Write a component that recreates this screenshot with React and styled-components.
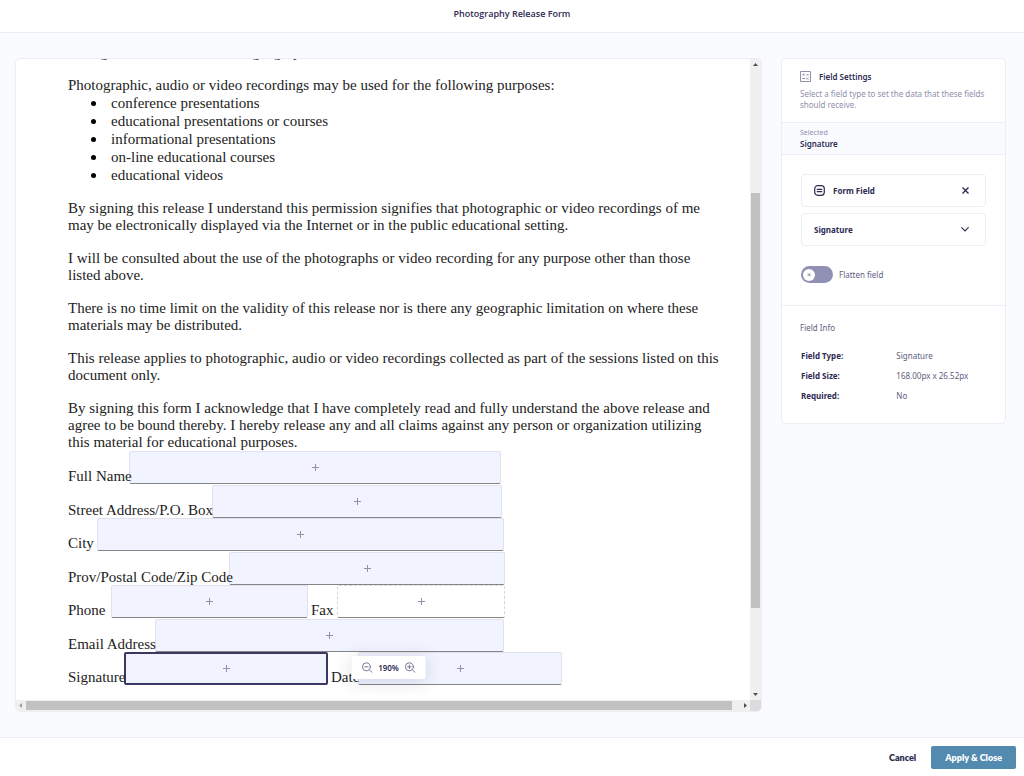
import React, { useState } from "react";
import styled, { createGlobalStyle } from "styled-components";

const introLines = ["settings within an unrestricted geographic area."];

const purposes = [
  "conference presentations",
  "educational presentations or courses",
  "informational presentations",
  "on-line educational courses",
  "educational videos",
];

const paragraphs = [
  [
    "By signing this release I understand this permission signifies that photographic or video recordings of me",
    "may be electronically displayed via the Internet or in the public educational setting.",
  ],
  [
    "I will be consulted about the use of the photographs or video recording for any purpose other than those",
    "listed above.",
  ],
  [
    "There is no time limit on the validity of this release nor is there any geographic limitation on where these",
    "materials may be distributed.",
  ],
  [
    "This release applies to photographic, audio or video recordings collected as part of the sessions listed on this",
    "document only.",
  ],
  [
    "By signing this form I acknowledge that I have completely read and fully understand the above release and",
    "agree to be bound thereby. I hereby release any and all claims against any person or organization utilizing",
    "this material for educational purposes.",
  ],
];

// widths are in page pixels at the current zoom level
const formRows = [
  [{ label: "Full Name", labelWidth: 61, width: 372 }],
  [{ label: "Street Address/P.O. Box", labelWidth: 144, width: 290 }],
  [{ label: "City", labelWidth: 29, width: 407 }],
  [{ label: "Prov/Postal Code/Zip Code", labelWidth: 161, width: 276 }],
  [
    { label: "Phone", labelWidth: 43, width: 197 },
    { label: "Fax", labelWidth: 26, width: 168, variant: "empty" },
  ],
  [{ label: "Email Address", labelWidth: 87, width: 349 }],
  [
    { label: "Signature", labelWidth: 56, width: 204, variant: "selected" },
    { label: "Date", labelWidth: 27, width: 204 },
  ],
];

const info = [
  ["Field Type:", "Signature"],
  ["Field Size:", "168.00px x 26.52px"],
  ["Required:", "No"],
];

const Lines = ({ lines }) => (
  <p>
    {lines.map((line) => (
      <Line key={line}>{line} </Line>
    ))}
  </p>
);

const PlusIcon = () => (
  <svg width="7" height="7" viewBox="0 0 7 7" stroke="#8f91ad" aria-hidden="true">
    <path d="M3.5 0v7M0 3.5h7" />
  </svg>
);

const ZoomIcon = ({ plus }) => (
  <svg
    width="11"
    height="11"
    viewBox="0 0 11 11"
    fill="none"
    stroke="#77789a"
    strokeLinecap="round"
    aria-hidden="true"
  >
    <circle cx="4.8" cy="4.8" r="4" />
    <path d="M7.8 7.8l2.6 2.6M3 4.8h3.6" />
    {plus && <path d="M4.8 3v3.6" />}
  </svg>
);

const SettingsIcon = () => (
  <svg width="11" height="11" viewBox="0 0 11 11" fill="none" stroke="#8f90ad" aria-hidden="true">
    <path d="M.5.5h10v10H.5z" />
    <path d="M2.2 3.8h2.6M6.2 3.8h2.6M3.5 2.6v1.2M2.2 7.5h3M6.4 6.5l2 2M8.4 6.5l-2 2" />
  </svg>
);

const FieldIcon = () => (
  <svg
    width="11"
    height="11"
    viewBox="0 0 11 11"
    fill="none"
    stroke="#2d2b52"
    strokeWidth="1.2"
    strokeLinecap="round"
    aria-hidden="true"
  >
    <rect x=".7" y=".7" width="9.6" height="9.6" rx="3" />
    <path d="M3.2 4.3h4.6M3.2 6.7h4.6" />
  </svg>
);

const CloseIcon = () => (
  <svg width="7" height="7" viewBox="0 0 7 7" stroke="#2d2b52" strokeWidth="1.4" aria-hidden="true">
    <path d="M.5.5l6 6M6.5.5l-6 6" />
  </svg>
);

const ChevronIcon = () => (
  <svg
    width="8"
    height="5"
    viewBox="0 0 8 5"
    fill="none"
    stroke="#2d2b52"
    strokeWidth="1.1"
    strokeLinecap="round"
    aria-hidden="true"
  >
    <path d="M.7.7L4 4 7.3.7" />
  </svg>
);

const Arrow = ({ d, color = "#505050" }) => (
  <svg width="5" height="5" viewBox="0 0 5 5" fill={color} aria-hidden="true">
    <path d={d} />
  </svg>
);

const App = () => {
  const [flatten, setFlatten] = useState(false);
  const [type, setType] = useState("Signature");

  return (
    <>
      <GlobalStyle />
      <Wrapper>
        <Header>
          <h1>Photography Release Form</h1>
        </Header>

        <Main>
          <Viewer>
            <Viewport>
              <Page>
                <Lines lines={introLines} />
                <div>
                  <Line>
                    Photographic, audio or video recordings may be used for the following purposes:
                  </Line>
                  <Purposes>
                    {purposes.map((item) => (
                      <li key={item}>{item}</li>
                    ))}
                  </Purposes>
                </div>
                {paragraphs.map((lines) => (
                  <Lines key={lines[0]} lines={lines} />
                ))}
              </Page>
              <FormRows>
                {formRows.map((fields) => (
                  <FormRow key={fields[0].label}>
                    {fields.map(({ label, labelWidth, width, variant }) => (
                      <Field key={label}>
                        <FieldLabel $width={labelWidth}>{label}</FieldLabel>
                        <FieldBox type="button" aria-label={label} $width={width} $variant={variant}>
                          <PlusIcon />
                        </FieldBox>
                      </Field>
                    ))}
                  </FormRow>
                ))}
              </FormRows>
            </Viewport>

            <VerticalBar>
              <Arrow d="M0 4h5L2.5 1z" />
              <Track>
                <VerticalThumb />
              </Track>
              <Arrow d="M0 1h5L2.5 4z" />
            </VerticalBar>
            <HorizontalBar>
              <Arrow d="M4 0v5L1 2.5z" color="#a0a0a0" />
              <Track>
                <HorizontalThumb />
              </Track>
              <Arrow d="M1 0v5l3-2.5z" />
            </HorizontalBar>
            <Corner />

            <ZoomControl>
              <IconButton type="button" aria-label="Zoom out">
                <ZoomIcon />
              </IconButton>
              <span>190%</span>
              <IconButton type="button" aria-label="Zoom in">
                <ZoomIcon plus />
              </IconButton>
            </ZoomControl>
          </Viewer>

          <Sidebar>
            <Intro>
              <h2>
                <SettingsIcon />
                Field Settings
              </h2>
              <p>Select a field type to set the data that these fields should receive.</p>
            </Intro>
            <Selected>
              <span>Selected</span>
              <strong>Signature</strong>
            </Selected>
            <Settings>
              <Card>
                <FieldIcon />
                <strong>Form Field</strong>
                <IconButton type="button" aria-label="Remove form field">
                  <CloseIcon />
                </IconButton>
              </Card>
              <SelectCard>
                <select aria-label="Field type" value={type} onChange={(e) => setType(e.target.value)}>
                  <option>Signature</option>
                  <option>Text</option>
                  <option>Date</option>
                </select>
                <ChevronIcon />
              </SelectCard>
              <ToggleLabel>
                <Toggle
                  type="checkbox"
                  checked={flatten}
                  onChange={(e) => setFlatten(e.target.checked)}
                />
                Flatten field
              </ToggleLabel>
            </Settings>
            <Info>
              <h3>Field Info</h3>
              <table>
                <tbody>
                  {info.map(([name, value]) => (
                    <tr key={name}>
                      <th scope="row">{name}</th>
                      <td>{value}</td>
                    </tr>
                  ))}
                </tbody>
              </table>
            </Info>
          </Sidebar>
        </Main>

        <Footer>
          <TextButton type="button">Cancel</TextButton>
          <PrimaryButton type="button">Apply &amp; Close</PrimaryButton>
        </Footer>
      </Wrapper>
    </>
  );
};

export default App;

const GlobalStyle = createGlobalStyle`
  * {
    box-sizing: border-box;
  }

  body {
    margin: 0;
    background: #fafbff;
    color: #2d2b52;
    font-family: "Noto Sans", "Open Sans", sans-serif;
    font-size: 8px;
    line-height: 11px;
  }

  h1, h2, h3, p, ul {
    margin: 0;
    padding: 0;
  }

  button, select {
    font: inherit;
    color: inherit;
    cursor: pointer;
  }

  svg {
    flex-shrink: 0;
  }
`;

const Wrapper = styled.div`
  display: flex;
  flex-direction: column;
  min-height: 100vh;
`;

const Header = styled.header`
  padding: 8px 16px 12px;
  background: #fff;
  border-bottom: 1px solid #eceef5;
  text-align: center;

  h1 {
    font-family: "Open Sans", "Noto Sans", sans-serif;
    font-size: 9px;
    line-height: 12px;
    font-weight: 600;
  }
`;

const Main = styled.main`
  flex: 1;
  display: flex;
  align-items: flex-start;
  gap: 19px;
  padding: 25px 18px 25px 15px;
`;

const Viewer = styled.section`
  position: relative;
  flex: 1;
  align-self: stretch;
  min-width: 0;
  display: grid;
  grid-template-columns: minmax(0, 1fr) 11px;
  grid-template-rows: minmax(0, 1fr) 11px;
  border: 1px solid #eceef5;
  border-radius: 5px;
  background: #fff;
  overflow: hidden;
`;

const Viewport = styled.div`
  overflow: hidden;
  padding: 0 0 14px 52px;
  color: #222;
  font-family: "Liberation Serif", "Times New Roman", serif;
  font-size: 15px;
  line-height: 17px;
`;

/* page is scrolled down past its first paragraph */
const Page = styled.div`
  display: flex;
  flex-direction: column;
  gap: 16px;
  margin-top: -15px;
`;

const Line = styled.span`
  display: block;
  white-space: nowrap;
`;

const Purposes = styled.ul`
  padding-left: 23px;
  line-height: 18px;
  list-style: none;

  li {
    display: flex;
  }

  li::before {
    content: "";
    width: 5px;
    height: 5px;
    margin: 7px 15px 0 0;
    border-radius: 50%;
    background: #000;
  }
`;

const FormRows = styled.div`
  display: grid;
  grid-template-rows: repeat(7, minmax(0, 1fr));
  height: 235px;
`;

const FormRow = styled.div`
  display: flex;
  gap: 3px;
`;

const Field = styled.div`
  display: flex;
  align-items: flex-start;
`;

/* long labels run up to the box, keep them above its border */
const FieldLabel = styled.span`
  position: relative;
  z-index: 1;
  width: ${({ $width }) => $width}px;
  padding-top: 17px;
  white-space: nowrap;
`;

const variants = {
  filled: "background: #f1f3ff; border: 1px solid #dfe1ee; border-bottom-color: #858585;",
  empty: "background: #fff; border: 1px dashed #d5d6e0; border-bottom: 1px solid #858585;",
  selected: "background: #f1f3ff; border: 2px solid #3a3860;",
};

const FieldBox = styled.button`
  display: grid;
  place-items: center;
  width: ${({ $width }) => $width}px;
  height: 33px;
  padding: 0;
  border-radius: 2px;
  ${({ $variant }) => variants[$variant || "filled"]}
`;

const VerticalBar = styled.div`
  display: flex;
  flex-direction: column;
  align-items: center;
  gap: 3px;
  padding: 3px 0;
  background: #f0f0f0;
`;

const HorizontalBar = styled.div`
  display: flex;
  align-items: center;
  gap: 3px;
  padding: 0 2px;
  background: #f0f0f0;
`;

const Track = styled.div`
  flex: 1;
  display: flex;
  align-self: stretch;
  justify-content: center;
`;

const VerticalThumb = styled.div`
  width: 9px;
  height: 67%;
  margin-top: 123px;
  background: #c1c1c1;
`;

const HorizontalThumb = styled.div`
  width: 100%;
  height: 9px;
  margin: 1px 8px 0 0;
  background: #c1c1c1;
`;

const Corner = styled.div`
  background: #dcdcdc;
`;

const ZoomControl = styled.div`
  position: absolute;
  z-index: 2;
  left: 50%;
  bottom: 32px;
  transform: translateX(-50%);
  display: flex;
  align-items: center;
  gap: 6px;
  padding: 6px 10px;
  border-radius: 2px;
  background: #fff;
  box-shadow: 0 2px 18px rgba(45, 43, 82, 0.16);
  font-weight: 600;
`;

const IconButton = styled.button`
  display: flex;
  padding: 0;
  border: 0;
  background: none;
`;

const Sidebar = styled.aside`
  width: 225px;
  border: 1px solid #eceef5;
  border-radius: 5px;
  background: #fff;
`;

const Intro = styled.div`
  padding: 12px 18px;

  h2 {
    display: flex;
    align-items: center;
    gap: 8px;
    font-size: 8px;
    font-weight: 600;
  }

  p {
    margin-top: 6px;
    color: #8f90ad;
  }
`;

const Selected = styled.div`
  display: flex;
  flex-direction: column;
  padding: 4px 18px 5px;
  border: 1px solid #eceef5;
  border-width: 1px 0;
  background: #fafbff;

  span {
    color: #8f90ad;
    font-size: 7px;
  }

  strong {
    font-weight: 600;
  }
`;

const Settings = styled.div`
  display: flex;
  flex-direction: column;
  gap: 6px;
  padding: 19px 19px 22px;
`;

const Card = styled.div`
  display: flex;
  align-items: center;
  gap: 8px;
  height: 33px;
  padding: 0 16px 0 12px;
  border: 1px solid #eceef5;
  border-radius: 4px;

  strong {
    flex: 1;
  }
`;

const SelectCard = styled(Card)`
  select {
    flex: 1;
    padding: 0;
    border: 0;
    background: none;
    appearance: none;
    font-weight: 700;
  }
`;

const ToggleLabel = styled.label`
  display: flex;
  align-items: center;
  gap: 6px;
  margin-top: 14px;
  color: #5d5e80;
`;

const Toggle = styled.input`
  appearance: none;
  display: flex;
  align-items: center;
  width: 32px;
  height: 17px;
  margin: 0;
  padding: 0 2px;
  border-radius: 9px;
  background: #8f90b4;
  cursor: pointer;

  &::before {
    content: "×";
    width: 12px;
    height: 12px;
    border-radius: 50%;
    background: #fff;
    color: #77789a;
    font-size: 8px;
    line-height: 12px;
    text-align: center;
  }

  &:checked {
    justify-content: flex-end;
    background: #528ab0;
  }
`;

const Info = styled.div`
  padding: 16px 18px 18px;
  border-top: 1px solid #eceef5;
  color: #5d5e80;

  h3 {
    font-size: 8px;
    font-weight: 400;
  }

  table {
    width: 100%;
    margin-top: 12px;
    border-collapse: collapse;
  }

  th,
  td {
    height: 20px;
    padding: 0 1px;
    text-align: left;
  }

  th {
    width: 51%;
    color: #2d2b52;
  }
`;

const Footer = styled.footer`
  display: flex;
  align-items: center;
  justify-content: flex-end;
  gap: 15px;
  padding: 8px 8px 7px;
  border-top: 1px solid #eceef5;
  background: #fff;
  font-family: Lato, "Open Sans", sans-serif;
  font-size: 9px;
  line-height: 11px;
`;

const TextButton = styled.button`
  padding: 0;
  border: 0;
  background: none;
  font-weight: 800;
`;

const PrimaryButton = styled.button`
  padding: 6px 14px;
  border: 0;
  border-radius: 2px;
  background: #528ab0;
  color: #fff;
  font-weight: 800;
`;
